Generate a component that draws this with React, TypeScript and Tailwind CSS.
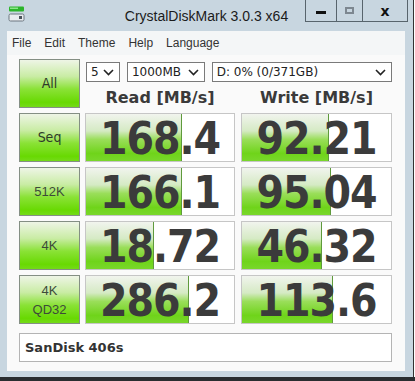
import React from 'react';

const rows = [
  { label: ['Seq'], casual: true, read: '168.4', readFill: 96, write: '92.21', writeFill: 87 },
  { label: ['512K'], casual: false, read: '166.1', readFill: 96, write: '95.04', writeFill: 89 },
  { label: ['4K'], casual: false, read: '18.72', readFill: 68, write: '46.32', writeFill: 80 },
  { label: ['4K', 'QD32'], casual: false, read: '286.2', readFill: 103, write: '113.6', writeFill: 91 },
];

function Chevron() {
  return (
    <svg width="11" height="7" viewBox="0 0 11 7" className="shrink-0">
      <polyline points="1,1 5.5,5.5 10,1" fill="none" stroke="#222" strokeWidth="1.6" />
    </svg>
  );
}

function FakeSelect({ value, width }: { value: string; width: string }) {
  return (
    <div
      className={`${width} h-[20px] flex items-center justify-between border border-[#7a7a7a] bg-white pl-[4px] pr-[5px] text-[12px] text-[#222] font-['DejaVu_Sans',sans-serif]`}
    >
      <span>{value}</span>
      <Chevron />
    </div>
  );
}

function LabelButton({ lines, casual }: { lines: string[]; casual?: boolean }) {
  return (
    <div className="h-[49px] flex flex-col items-center justify-center border border-[#848f84] bg-[linear-gradient(to_bottom,#eef5e6_0%,#c9eca4_35%,#8ae236_62%,#68d902_90%,#74db18_100%)]">
      {lines.map((l) => (
        <span
          key={l}
          className={
            casual
              ? "text-[14px] leading-[19px] text-[#2e3a2a] font-['DejaVu_Sans',sans-serif] font-stretch-condensed"
              : "text-[13px] leading-[19px] text-[#3d4a3a] font-['Liberation_Sans',sans-serif]"
          }
        >
          {l}
        </span>
      ))}
    </div>
  );
}

function ValueBox({ value, fill }: { value: string; fill: number }) {
  return (
    <div className="relative h-[49px] border border-[#c6c6c6] bg-white">
      <div
        className="absolute left-0 top-0 bottom-0 border-r border-[#5f9a3c] bg-[linear-gradient(to_bottom,#f1f4ee_0%,#d5eac4_36%,#9ade5a_54%,#6fd41a_84%,#79d72b_100%)]"
        style={{ width: fill }}
      />
      <div className="relative h-full flex items-center justify-center pt-[2px] text-[44px] leading-[46px] font-bold tracking-[-1px] text-[#3b3b3b] font-['DejaVu_Sans',sans-serif] font-stretch-condensed whitespace-nowrap">
        {value}
      </div>
    </div>
  );
}

export default function App() {
  return (
    <div className="w-[415px] h-[381px] flex flex-col bg-[#c8d6e0] overflow-hidden">
      <div className="flex flex-1 min-h-0">
        {/* window */}
        <div className="w-[413px] flex flex-col bg-[#c8d6e0]">
          {/* title bar */}
          <div className="h-[31px] grid grid-cols-[1fr_auto_1fr] items-start">
            <div className="pl-[8px] pt-[6px]">
              <svg width="17" height="16" viewBox="0 0 17 16">
                <rect x="1" y="0.5" width="15" height="5" rx="1" fill="#2bb52b" />
                <rect x="2" y="1.5" width="8" height="1.5" fill="#8ae68a" />
                <rect x="1" y="8" width="15" height="7" rx="1.5" fill="#e9ecef" stroke="#6d7780" />
                <rect x="11" y="10" width="3" height="3" fill="#4a535b" />
              </svg>
            </div>
            <div className="pt-[6px] text-[14px] text-[#1b1b1b] font-['Liberation_Sans',sans-serif]">
              CrystalDiskMark 3.0.3 x64
            </div>
            <div className="flex justify-end pr-[5px]">
              <div className="flex h-[22px] border border-t-0 border-[#58646c]">
                <div className="w-[31px] flex items-center justify-center border-r border-[#58646c]">
                  <div className="w-[10px] h-[3px] bg-[#111] mt-[3px]" />
                </div>
                <div className="w-[26px] flex items-center justify-center border-r border-[#58646c]">
                  <div className="w-[9px] h-[7px] border-2 border-[#7d8790]" />
                </div>
                <div className="w-[44px] flex items-center justify-center text-[14px] font-bold text-[#111] font-['DejaVu_Sans',sans-serif] leading-none">
                  x
                </div>
              </div>
            </div>
          </div>

          <div className="flex-1 flex flex-col pl-[7px] pr-[8px]">
            {/* menu */}
            <div className="h-[24px] flex items-center gap-[13px] pl-[5px] bg-[#f4f6f7] text-[12px] text-[#333] font-['Liberation_Sans',sans-serif]">
              <span>File</span>
              <span>Edit</span>
              <span>Theme</span>
              <span>Help</span>
              <span>Language</span>
            </div>

            {/* client */}
            <div className="flex-1 flex flex-col bg-[#fafafa] pl-[12px] pr-[13px] pt-[4px]">
              <div className="grid grid-cols-[61px_155px_157px] gap-y-[5px]">
                <LabelButton lines={['All']} casual />
                <div className="col-span-2 flex flex-col pl-[5px]">
                  <div className="flex gap-[7px] pt-[3px] pl-[1px]">
                    <FakeSelect value="5" width="w-[34px]" />
                    <FakeSelect value="1000MB" width="w-[78px]" />
                    <FakeSelect value="D: 0% (0/371GB)" width="w-[181px]" />
                  </div>
                  <div className="grid grid-cols-[150px_151px] gap-x-[6px] pt-[6px] text-[16px] font-bold text-[#3a3a3a] font-['DejaVu_Sans',sans-serif] leading-[20px]">
                    <div className="text-center">Read [MB/s]</div>
                    <div className="text-center">Write [MB/s]</div>
                  </div>
                </div>

                {rows.map((r) => (
                  <React.Fragment key={r.label.join('-')}>
                    <LabelButton lines={r.label} casual={r.casual} />
                    <div className="pl-[5px]">
                      <ValueBox value={r.read} fill={r.readFill} />
                    </div>
                    <div className="pl-[6px]">
                      <ValueBox value={r.write} fill={r.writeFill} />
                    </div>
                  </React.Fragment>
                ))}
              </div>

              <div className="mt-[9px] h-[29px] flex items-center border border-[#b4b4b4] bg-white pl-[5px] text-[13px] font-bold text-[#333] font-['DejaVu_Sans',sans-serif]">
                SanDisk 406s
              </div>
            </div>
          </div>
          <div className="h-[6px]" />
        </div>
        <div className="w-[2px] border-l border-[#333] bg-white" />
      </div>
      <div className="h-[4px] bg-[#2a2d30]" />
    </div>
  );
}
